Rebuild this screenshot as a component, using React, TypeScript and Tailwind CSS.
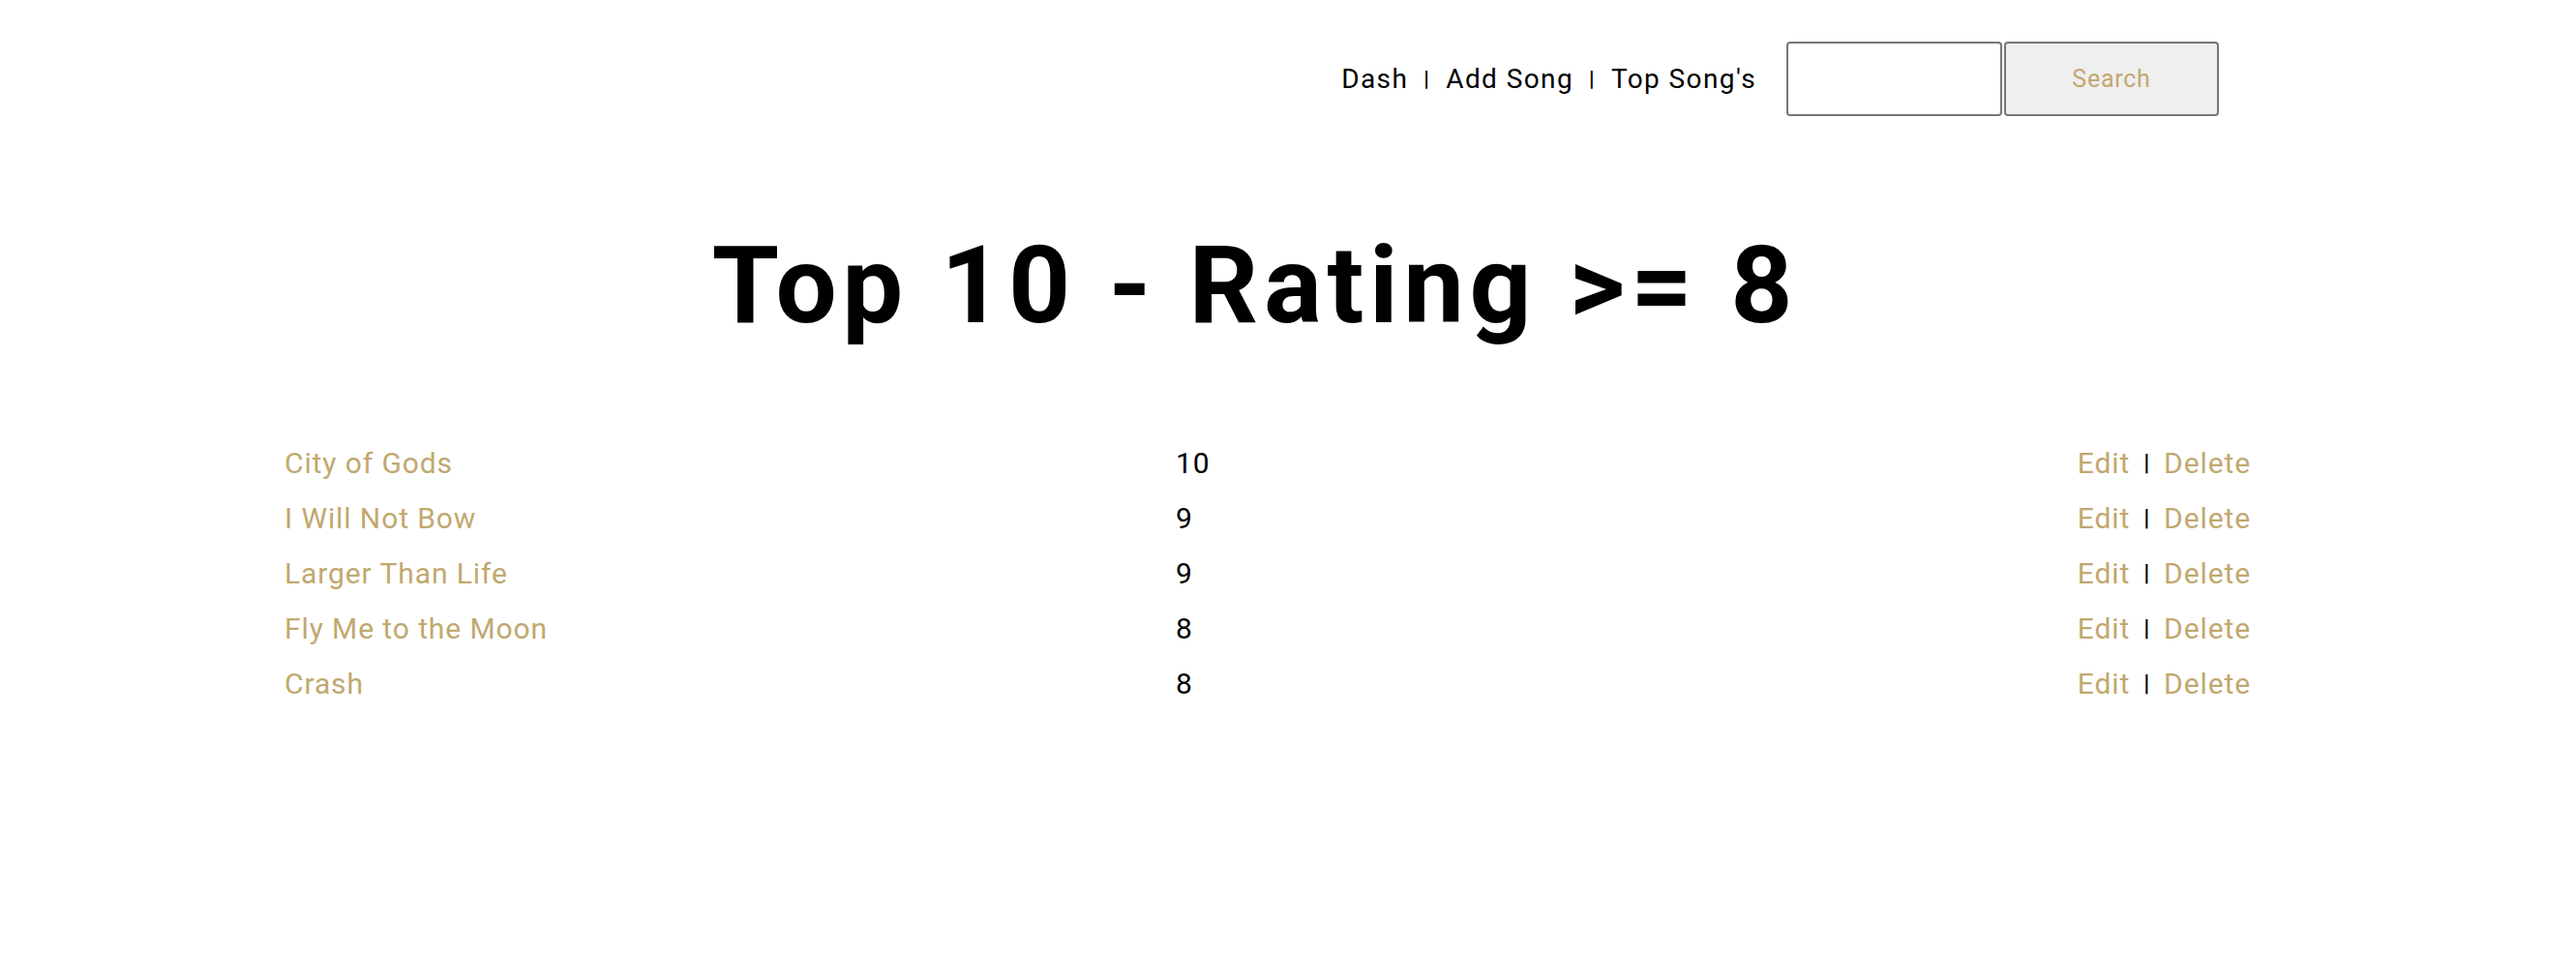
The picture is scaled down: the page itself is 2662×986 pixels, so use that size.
import React from 'react'

const songs = [
  { title: 'City of Gods', rating: 10 },
  { title: 'I Will Not Bow', rating: 9 },
  { title: 'Larger Than Life', rating: 9 },
  { title: 'Fly Me to the Moon', rating: 8 },
  { title: 'Crash', rating: 8 },
]

function Header() {
  return (
    <header className="flex items-center justify-end pt-[43px] pr-[369px]">
      <nav className="flex items-center gap-[16px] text-[28px] tracking-[0.05em] text-black">
        <a href="#">Dash</a>
        <span className="text-[22px] font-bold">|</span>
        <a href="#">Add Song</a>
        <span className="text-[22px] font-bold">|</span>
        <a href="#">Top Song's</a>
      </nav>
      <form className="ml-[31px] flex items-center gap-[2px]">
        <input
          type="text"
          className="w-[223px] h-[77px] rounded-[4px] border-2 border-[#767676] bg-white px-2 text-[25px]"
        />
        <button
          type="button"
          className="w-[222px] h-[77px] rounded-[4px] border-2 border-[#767676] bg-[#efefef] text-[25px] tracking-[0.03em] text-[#c1a86f]"
        >
          Search
        </button>
      </form>
    </header>
  )
}

export default function App() {
  return (
    <div className="min-h-screen bg-white font-['Roboto',sans-serif]">
      <Header />
      <h1 className="mt-[119px] pr-[68px] text-center text-[112px] leading-none font-bold tracking-[0.05em] text-black">
        Top 10 - Rating &gt;= 8
      </h1>
      <div className="mt-[99px] pl-[294px] pr-[336px]">
        {songs.map((s) => (
          <div key={s.title} className="flex h-[57px] items-center text-[30px] leading-[57px] tracking-[0.03em]">
            <a href="#" className="w-[921px] text-[#c1a86f]">
              {s.title}
            </a>
            <span className="flex-1 text-black">{s.rating}</span>
            <span className="flex items-center gap-[14px]">
              <a href="#" className="text-[#c1a86f]">Edit</a>
              <span className="text-[24px] font-bold text-black">|</span>
              <a href="#" className="text-[#c1a86f]">Delete</a>
            </span>
          </div>
        ))}
      </div>
    </div>
  )
}
